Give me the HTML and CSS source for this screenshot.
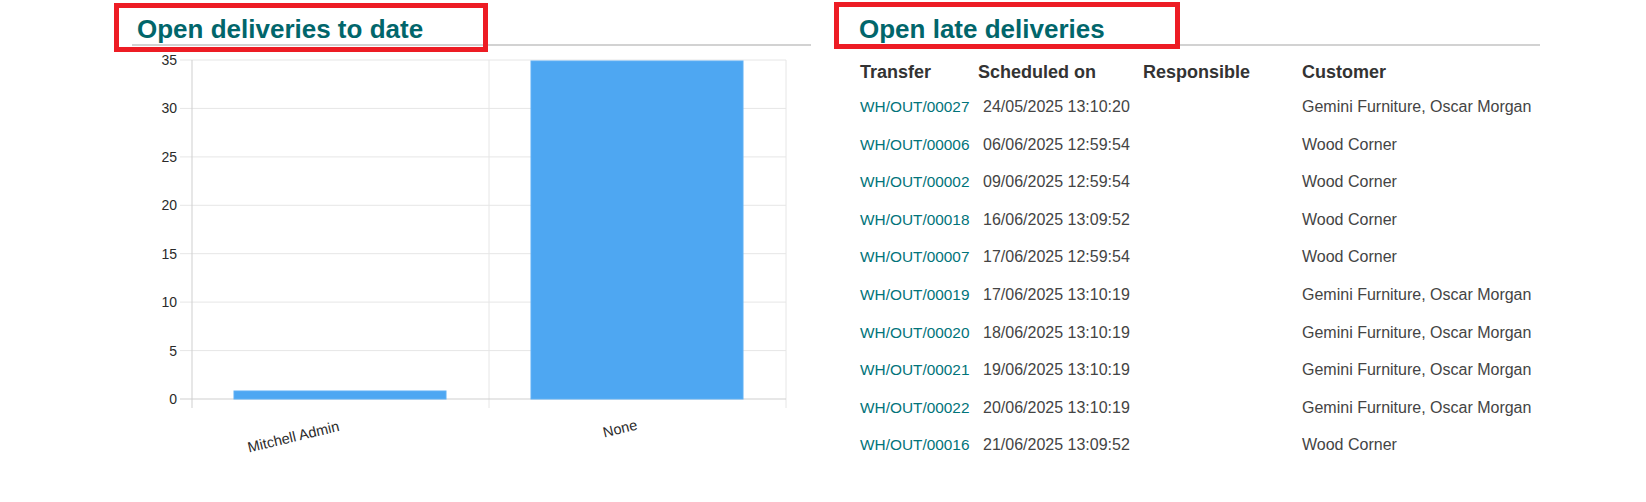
FILE: index.html
```html
<!DOCTYPE html>
<html lang="en">
<head>
<meta charset="utf-8">
<title>Deliveries</title>
<link rel="stylesheet" href="styles.css">
</head>
<body>
<div class="page">
  <section class="panel panel-left">
    <h2 class="panel-title">Open deliveries to date</h2>
    <svg class="chart" width="679" height="420" viewBox="0 0 679 420" xmlns="http://www.w3.org/2000/svg">
      <g class="grid">
        <line x1="48" y1="14" x2="654" y2="14"/>
        <line x1="48" y1="62.4" x2="654" y2="62.4"/>
        <line x1="48" y1="110.9" x2="654" y2="110.9"/>
        <line x1="48" y1="159.3" x2="654" y2="159.3"/>
        <line x1="48" y1="207.7" x2="654" y2="207.7"/>
        <line x1="48" y1="256.1" x2="654" y2="256.1"/>
        <line x1="48" y1="304.6" x2="654" y2="304.6"/>
        <line x1="357" y1="14" x2="357" y2="362"/>
        <line x1="654" y1="14" x2="654" y2="362"/>
      </g>
      <g class="axis">
        <line x1="60" y1="14" x2="60" y2="362"/>
        <line x1="48" y1="353" x2="654" y2="353"/>
      </g>
      <g class="ylabels">
        <text x="45" y="14">35</text>
        <text x="45" y="62.4">30</text>
        <text x="45" y="110.9">25</text>
        <text x="45" y="159.3">20</text>
        <text x="45" y="207.7">15</text>
        <text x="45" y="256.1">10</text>
        <text x="45" y="304.6">5</text>
        <text x="45" y="353">0</text>
      </g>
      <rect class="bar" x="102" y="345" width="212" height="8"/>
      <rect class="bar" x="399" y="15" width="212" height="338"/>
      <g class="xlabels">
        <text x="208" y="384.7" transform="rotate(-13.5 208 384.7)">Mitchell Admin</text>
        <text x="506" y="383.3" transform="rotate(-13.5 506 383.3)">None</text>
      </g>
    </svg>
    <div class="mark mark-left"></div>
  </section>
  <section class="panel panel-right">
    <h2 class="panel-title">Open late deliveries</h2>
    <table class="late">
      <colgroup>
        <col class="c-transfer">
        <col class="c-date">
        <col class="c-resp">
        <col class="c-cust">
      </colgroup>
      <thead>
        <tr><th>Transfer</th><th>Scheduled on</th><th>Responsible</th><th>Customer</th></tr>
      </thead>
      <tbody>
        <tr><td><a href="#">WH/OUT/00027</a></td><td class="date">24/05/2025 13:10:20</td><td></td><td>Gemini Furniture, Oscar Morgan</td></tr>
        <tr><td><a href="#">WH/OUT/00006</a></td><td class="date">06/06/2025 12:59:54</td><td></td><td>Wood Corner</td></tr>
        <tr><td><a href="#">WH/OUT/00002</a></td><td class="date">09/06/2025 12:59:54</td><td></td><td>Wood Corner</td></tr>
        <tr><td><a href="#">WH/OUT/00018</a></td><td class="date">16/06/2025 13:09:52</td><td></td><td>Wood Corner</td></tr>
        <tr><td><a href="#">WH/OUT/00007</a></td><td class="date">17/06/2025 12:59:54</td><td></td><td>Wood Corner</td></tr>
        <tr><td><a href="#">WH/OUT/00019</a></td><td class="date">17/06/2025 13:10:19</td><td></td><td>Gemini Furniture, Oscar Morgan</td></tr>
        <tr><td><a href="#">WH/OUT/00020</a></td><td class="date">18/06/2025 13:10:19</td><td></td><td>Gemini Furniture, Oscar Morgan</td></tr>
        <tr><td><a href="#">WH/OUT/00021</a></td><td class="date">19/06/2025 13:10:19</td><td></td><td>Gemini Furniture, Oscar Morgan</td></tr>
        <tr><td><a href="#">WH/OUT/00022</a></td><td class="date">20/06/2025 13:10:19</td><td></td><td>Gemini Furniture, Oscar Morgan</td></tr>
        <tr><td><a href="#">WH/OUT/00016</a></td><td class="date">21/06/2025 13:09:52</td><td></td><td>Wood Corner</td></tr>
      </tbody>
    </table>
    <div class="mark mark-right"></div>
  </section>
</div>
</body>
</html>
```

FILE: styles.css
```css
html, body {
  margin: 0;
  padding: 0;
  background: #ffffff;
}

body {
  font-family: "Liberation Sans", Arial, sans-serif;
  color: #444444;
  width: 1646px;
  height: 502px;
  overflow: hidden;
}

.page {
  display: flex;
  gap: 43px;
  padding-left: 132px;
  padding-top: 11px;
}

.panel {
  position: relative;
}

.panel-left {
  width: 679px;
}

.panel-right {
  width: 686px;
}

.panel-title {
  margin: 0;
  padding: 3px 0 0 5px;
  font-size: 26px;
  line-height: 30px;
  font-weight: bold;
  color: #01666b;
  border-bottom: 2px solid #d2d2d2;
}

/* Chart */
.chart {
  display: block;
  overflow: visible;
}

.chart .grid line {
  stroke: #e6e6e6;
  stroke-width: 1;
}

.chart .axis line {
  stroke: #cfcfcf;
  stroke-width: 1;
}

.chart text {
  font-family: "Liberation Sans", Arial, sans-serif;
  font-size: 14px;
  fill: #2a2a2a;
}

.chart .ylabels text {
  text-anchor: end;
  dominant-baseline: central;
}

.chart .xlabels text {
  text-anchor: end;
  font-size: 14.5px;
}

.chart .bar {
  fill: #4ea7f2;
  stroke: #5eb0f5;
  stroke-width: 1;
}

/* Table */
.late {
  margin-top: 10px;
  border-collapse: collapse;
  table-layout: fixed;
  width: 686px;
}

.c-transfer { width: 118px; }
.c-date { width: 165px; }
.c-resp { width: 159px; }
.c-cust { width: 244px; }

.late th {
  text-align: left;
  font-size: 18px;
  font-weight: bold;
  color: #333333;
  height: 32px;
  line-height: 32px;
  padding: 0 0 0 6px;
  white-space: nowrap;
}

.late td {
  font-size: 16px;
  color: #444444;
  height: 37.6px;
  line-height: 37.6px;
  padding: 0 0 0 6px;
  white-space: nowrap;
}

.late td.date {
  padding-left: 11px;
}

.late a {
  color: #01747a;
  text-decoration: none;
  font-size: 15.4px;
}

/* Annotation boxes */
.mark {
  position: absolute;
  border: 5px solid #ed1c24;
  box-sizing: border-box;
  pointer-events: none;
}

.mark-left {
  left: -18px;
  top: -8px;
  width: 374px;
  height: 49px;
}

.mark-right {
  left: -20px;
  top: -9px;
  width: 346px;
  height: 47px;
}
```
